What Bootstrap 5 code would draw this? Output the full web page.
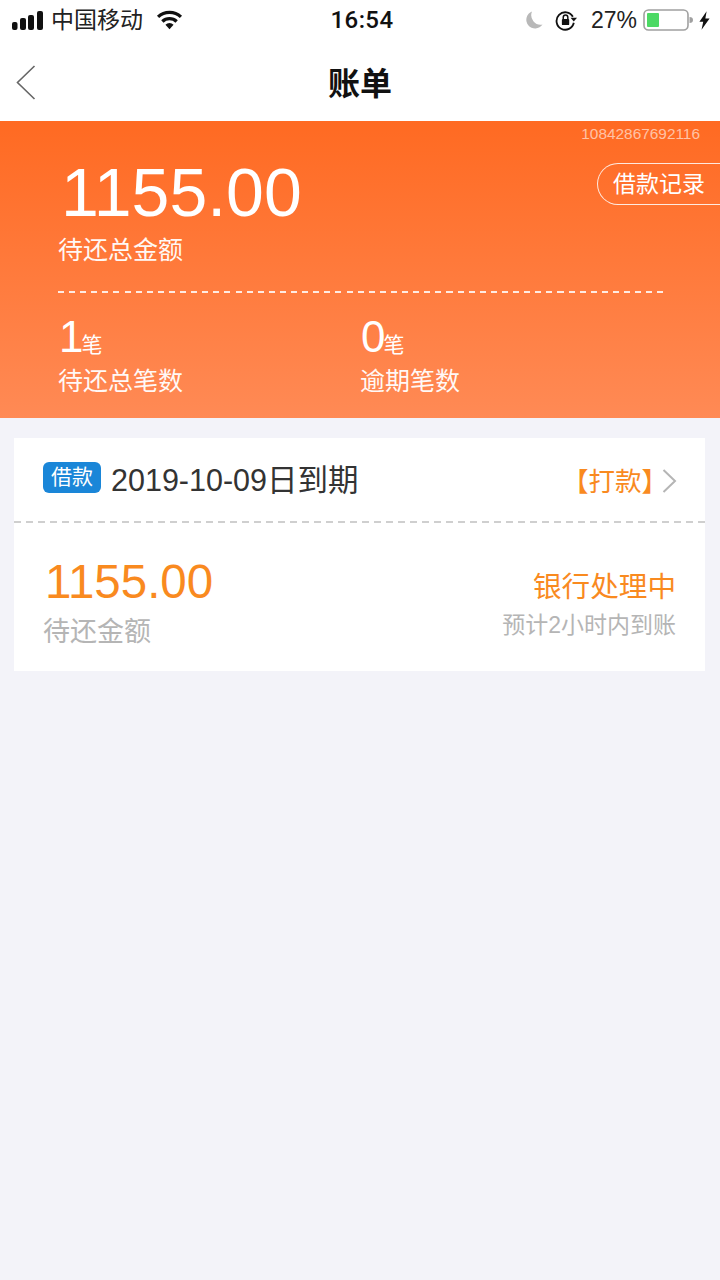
<!DOCTYPE html>
<html lang="zh-CN">
<head>
<meta charset="utf-8">
<title>账单</title>
<link rel="stylesheet" href="https://cdn.jsdelivr.net/npm/bootstrap@5.3.0/dist/css/bootstrap.min.css">
<style>
html,body{height:100%}
body{background:#f3f3f9;font-family:"Liberation Sans","Noto Sans CJK SC",sans-serif;color:#333;width:720px;min-height:1280px;overflow:hidden}
.sbar{height:40px;padding:0 10px 0 12px;color:#111;font-size:24px;line-height:40px;position:relative;background:#fff}
.sbar-carrier{font-size:23px;margin-left:8px;color:#222}
.sbar-wifi{margin-left:13px}
.sbar-time{position:absolute;left:4px;right:0;text-align:center;font-family:Roboto,"Liberation Sans",sans-serif;font-size:24px;font-weight:500;color:#111;letter-spacing:.4px;top:0}
.sbar-lock{margin-left:11px}
.sbar-pct{font-size:23px;color:#222;margin-left:13px}
.sbar-batt{margin-left:6px}
.sbar-bolt{margin-left:6px}
.navhead{height:81px;padding-top:7px;background:#fff;position:relative;font-size:32px;font-weight:700;color:#111}
.navback{position:absolute;left:16px;top:25px}
.hero{height:297px;background:linear-gradient(180deg,#ff6a22 0%,#ff8a55 100%);position:relative;color:#fff;padding:0 57px 0 58px}
.hero-id{position:absolute;right:20px;top:4px;font-size:15.4px;line-height:17px;color:rgba(255,255,255,.6)}
.hero-rec{position:absolute;right:-1px;top:42px;width:124px;height:42px;border:1px solid rgba(255,255,255,.85);border-right:0;border-radius:21px 0 0 21px;font-size:23px;line-height:40px;padding-left:15px;white-space:nowrap}
.hero-amt{font-size:68px;line-height:68px;padding-top:37px;padding-left:3px;height:103px}
.hero-lab{font-size:25px;line-height:30px;color:#fff;opacity:.95;white-space:nowrap}
.hero-lab-top{margin-top:11px}
.hero-div{height:2px;margin-top:26px;background:repeating-linear-gradient(90deg,rgba(255,255,255,.85) 0 6px,transparent 6px 11.100px)}
.hero-stats{margin-top:22px}
.hero-num{font-size:44px;line-height:44px;margin-bottom:7px;padding-left:1px}
.hero-unit{font-size:21px;line-height:1;margin-left:-2px}
.hero-col2{margin-left:302px}
.hero-col1{width:0;white-space:nowrap}
.bill{margin:20px 14px 0 14px;background:#fff;height:233px;width:691px}
.bill-top{height:83px;padding:0 29px 0 29px}
.bill-dash{height:2px;background:repeating-linear-gradient(90deg,#cfcfcf 0 7px,transparent 7px 12px)}
.bill-tag{background:#1a86d8;color:#fff;border-radius:6px;font-size:21px;line-height:30px;height:31px;width:58px;text-align:center;margin-top:-4px}
.bill-date{font-size:30.5px;color:#333;margin-left:10px;line-height:36px}
.bill-act{font-size:26.5px;color:#f98a1f;line-height:36px;margin-right:-15px;margin-top:4px}
.bill-chev{margin-left:9px;margin-right:-1px;margin-top:2px}
.bill-main{padding:31px 29px 0 30px}
.bill-amt{font-size:47.5px;line-height:56px;color:#f98a1f;margin-left:1px}
.bill-lab{font-size:27px;line-height:36px;color:#b5b5b5;margin-left:-1px;margin-top:4px}
.bill-st{font-size:28.6px;line-height:36px;color:#f98a1f;margin-top:15px}
.bill-sub{font-size:23px;line-height:30px;color:#b5b5b5;margin-top:5px}
</style>
</head>
<body>
<div class="sbar d-flex align-items-center">
  <svg width="31" height="19" viewBox="0 0 31 19"><rect x="0" y="11" width="5.500" height="8" rx="2" fill="#111"/><rect x="8" y="7" width="6" height="12" rx="2" fill="#111"/><rect x="16" y="4" width="6" height="15" rx="2" fill="#111"/><rect x="25" y="0" width="6" height="19" rx="2" fill="#111"/></svg>
  <span class="sbar-carrier">中国移动</span>
  <svg class="sbar-wifi" width="27" height="20" viewBox="0 0 28 20"><path d="M14 19.500l-4.200-4.600a6 6 0 0 1 8.400 0z" fill="#111"/><path d="M7.800 12.800a9 9 0 0 1 12.400 0l2.400-2.500a12.600 12.600 0 0 0-17.200 0z" fill="#111"/><path d="M3.300 8a15.400 15.400 0 0 1 21.400 0l2.300-2.500a19 19 0 0 0-26 0z" fill="#111"/></svg>
  <span class="sbar-time">16:54</span>
  <div class="ms-auto d-flex align-items-center">
    <svg width="18" height="18" viewBox="0 0 18 18"><path d="M7 0.500a8.800 8.800 0 1 0 10.500 13A9.500 9.500 0 0 1 7 0.500z" fill="#b8b8b8"/></svg>
    <svg class="sbar-lock" width="24" height="22" viewBox="0 0 24 24"><path d="M19.500 8.500A9.500 9.500 0 1 0 20.500 15" fill="none" stroke="#111" stroke-width="2"/><path d="M17 9.500h7l-3.500 4z" fill="#111"/><rect x="7.500" y="11" width="8" height="6.500" rx="1" fill="#111"/><path d="M9 11V9a2.500 2.500 0 0 1 5 0v2" fill="none" stroke="#111" stroke-width="1.600"/></svg>
    <span class="sbar-pct">27%</span>
    <svg class="sbar-batt" width="50" height="22" viewBox="0 0 50 22"><rect x="1" y="1" width="44" height="20" rx="4.500" fill="#fff" stroke="#a0a0a0" stroke-width="1.600"/><rect x="4" y="4" width="12" height="14" rx="1" fill="#4cd964"/><path d="M46.500 8a3.500 3 0 0 1 0 6z" fill="#a0a0a0"/></svg>
    <svg class="sbar-bolt" width="11" height="19" viewBox="0 0 13 22"><path d="M9 0L0.500 12.500H5L3 22 12.500 8.500H7.500z" fill="#111"/></svg>
  </div>
</div>
<div class="navhead d-flex align-items-center justify-content-center">
  <svg class="navback" width="22" height="36" viewBox="0 0 22 36"><path d="M18.500 1L1.500 17.500l17 16.500" fill="none" stroke="#666" stroke-width="1.600"/></svg>
  <span>账单</span>
</div>
<div class="hero">
  <div class="hero-id">10842867692116</div>
  <div class="hero-rec">借款记录</div>
  <div class="hero-amt">1155.00</div>
  <div class="hero-lab hero-lab-top">待还总金额</div>
  <div class="hero-div"></div>
  <div class="hero-stats d-flex">
    <div class="hero-col1"><div class="hero-num">1<span class="hero-unit">笔</span></div><div class="hero-lab">待还总笔数</div></div>
    <div class="hero-col2"><div class="hero-num">0<span class="hero-unit">笔</span></div><div class="hero-lab">逾期笔数</div></div>
  </div>
</div>
<div class="bill">
  <div class="bill-top d-flex align-items-center">
    <span class="bill-tag">借款</span>
    <span class="bill-date">2019-10-09日到期</span>
    <span class="bill-act ms-auto">【打款】</span>
    <svg class="bill-chev" width="15" height="24" viewBox="0 0 15 24"><path d="M1.500 1L13 12 1.500 23" fill="none" stroke="#b5b5b5" stroke-width="2"/></svg>
  </div>
  <div class="bill-dash"></div>
  <div class="bill-main d-flex justify-content-between">
    <div><div class="bill-amt">1155.00</div><div class="bill-lab">待还金额</div></div>
    <div class="text-end"><div class="bill-st">银行处理中</div><div class="bill-sub">预计2小时内到账</div></div>
  </div>
</div>
<script src="https://cdn.jsdelivr.net/npm/bootstrap@5.3.0/dist/js/bootstrap.bundle.min.js"></script>
</body>
</html>
